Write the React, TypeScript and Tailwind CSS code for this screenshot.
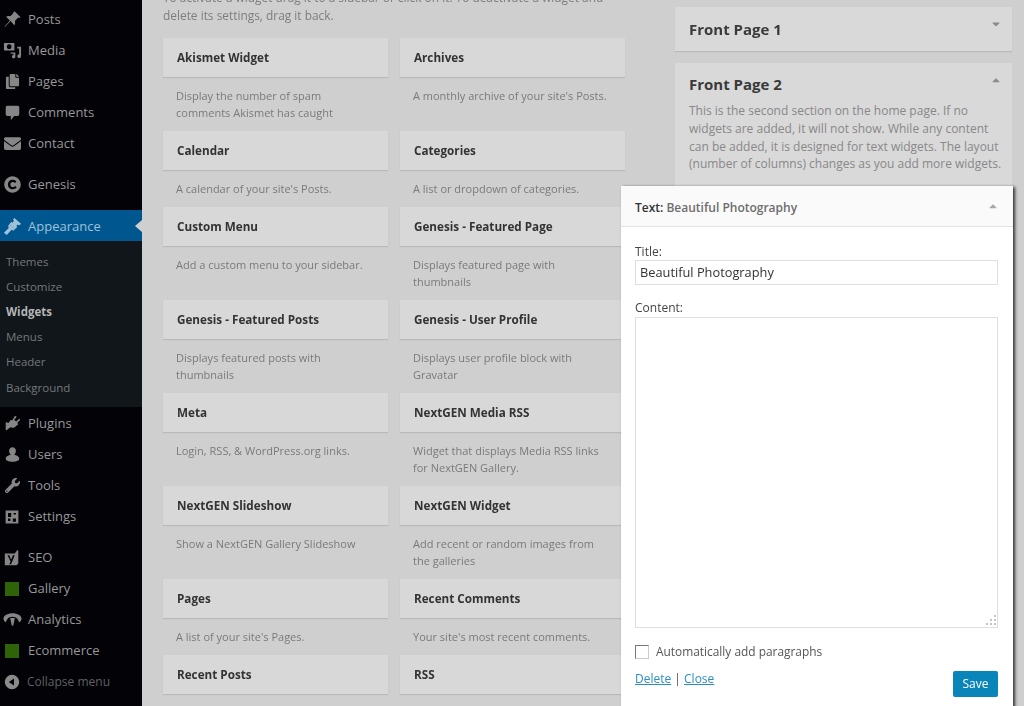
import { ReactNode } from 'react'
import { FaCopy, FaEnvelope, FaWrench, FaCopyright, FaCaretUp, FaCaretDown } from 'react-icons/fa'

const iconClass = 'w-[15px] h-[15px]'

function PinIcon() {
  return (
    <svg viewBox="0 0 20 20" className="w-[19px] h-[19px]" fill="currentColor">
      <path d="M12.5 1.5l6 6-1.5 1-1-.5-3.5 3.500c.6 2 .2 3.400-.7 4.500L8 11.700 2 18l-.5-.5L7.300 11 3.200 7.200C4.300 6.300 5.700 5.900 7.700 6.500L11.200 3l-.5-1z" />
    </svg>
  )
}

function MediaIcon() {
  return (
    <svg viewBox="0 0 20 20" className="w-[19px] h-[19px]" fill="currentColor">
      <path fillRule="evenodd" d="M1 2h11v8H1z M6.500 3.500a2.500 2.500 0 1 0 .01 0z" />
      <path d="M15 6h4v10a2 2 0 1 1-2-2V8h-2z M8 12h5v4.500a1.800 1.800 0 1 1-2-1.800V13.500H8z" />
    </svg>
  )
}

function CommentIcon() {
  return (
    <svg viewBox="0 0 20 20" className="w-[17px] h-[17px]" fill="currentColor">
      <path d="M4 2h12a2 2 0 0 1 2 2v8a2 2 0 0 1-2 2h-4l-4 5v-5H4a2 2 0 0 1-2-2V4a2 2 0 0 1 2-2z" />
    </svg>
  )
}

function BrushIcon() {
  return (
    <svg viewBox="0 0 20 20" className="w-[19px] h-[19px]" fill="currentColor">
      <path d="M12 1l7 6-2 2-1.500-1-1.500 1.500 1 1-2.500 2.500-6-5.500 2.500-2.500 1 1L11.500 4 10.500 2.500z" />
      <path d="M6.500 7.500l6 5.500-1.500 1.500-2-1-5 5.500-3-2.500 5-5-.5-2.200z" />
    </svg>
  )
}

function PlugIcon() {
  return (
    <svg viewBox="0 0 20 20" className="w-[17px] h-[17px]" fill="currentColor">
      <path d="M13 1l2 1-3 4 2.500 1.500L18 4l1 2-3.500 3.500 1.500 1-4 3.500c-2 1.500-4 1-5.500.5L3 18H2V8.500l3.500.5L8 5.500l1.500 1z" />
    </svg>
  )
}

function UserIcon() {
  return (
    <svg viewBox="0 0 20 20" className="w-[17px] h-[17px]" fill="currentColor">
      <path d="M10 1.500a4 4 0 0 1 4 4.500c0 2-1 3.500-2 4.200 3 .6 6 2 6 4.800 0 2-3 3.500-8 3.500s-8-1.500-8-3.500c0-2.800 3-4.200 6-4.800-1-.7-2-2.200-2-4.200a4 4 0 0 1 4-4.500z" />
    </svg>
  )
}

function SettingsIcon() {
  return (
    <svg viewBox="0 0 20 20" className="w-[16px] h-[16px]" fill="currentColor">
      <path fillRule="evenodd" d="M2 2h16v16H2z M5 5v5h4V5z M12 5v2h3V5z M11 12v4h4v-4z M5 12v3h3v-3z" />
    </svg>
  )
}

function YoastIcon() {
  return (
    <svg viewBox="0 0 20 20" className="w-[18px] h-[18px]" fill="currentColor">
      <path fillRule="evenodd" d="M2 5h11l3-4 1 1v14l-2 2H2z M5 7l3.500 7L7 17h2l4-10h-2l-2 5-2-5z" />
    </svg>
  )
}

function AnalyticsIcon() {
  return (
    <svg viewBox="0 0 20 20" className="w-[19px] h-[19px]" fill="currentColor">
      <path d="M10 3.500c5 0 9.500 2.500 9.500 5.500 0 1.500-1 3.500-2.500 4-1-3-2.500-6-7-6s-6 3-7 6C1.500 12.500.5 10.500.5 9 .5 6 5 3.500 10 3.500z" />
      <path d="M7.500 8.500h5l-1.500 7c0 1.500-2 1.500-2 0z" />
    </svg>
  )
}

function CollapseIcon() {
  return (
    <svg viewBox="0 0 20 20" className="w-[16px] h-[16px]" fill="currentColor">
      <path fillRule="evenodd" d="M10 1a9 9 0 1 0 .01 0z M12.500 5.500v9L6 10z" />
    </svg>
  )
}

function GreenSquare() {
  return <span className="block w-[14px] h-[14px] bg-[#2f6308]" />
}

type MenuItem = { label: string; icon: ReactNode }

const topItems: MenuItem[] = [
  { label: 'Posts', icon: <PinIcon /> },
  { label: 'Media', icon: <MediaIcon /> },
  { label: 'Pages', icon: <FaCopy className={iconClass} /> },
  { label: 'Comments', icon: <CommentIcon /> },
  { label: 'Contact', icon: <FaEnvelope className="w-[17px] h-[17px]" /> },
]

const middleItems: MenuItem[] = [
  { label: 'Plugins', icon: <PlugIcon /> },
  { label: 'Users', icon: <UserIcon /> },
  { label: 'Tools', icon: <FaWrench className={iconClass} /> },
  { label: 'Settings', icon: <SettingsIcon /> },
]

const bottomItems: MenuItem[] = [
  { label: 'SEO', icon: <YoastIcon /> },
  { label: 'Gallery', icon: <GreenSquare /> },
  { label: 'Analytics', icon: <AnalyticsIcon /> },
  { label: 'Ecommerce', icon: <GreenSquare /> },
]

const subItems = ['Themes', 'Customize', 'Widgets', 'Menus', 'Header', 'Background']

const widgets = [
  ['Akismet Widget', 'Display the number of spam comments Akismet has caught'],
  ['Archives', "A monthly archive of your site's Posts."],
  ['Calendar', "A calendar of your site's Posts."],
  ['Categories', 'A list or dropdown of categories.'],
  ['Custom Menu', 'Add a custom menu to your sidebar.'],
  ['Genesis - Featured Page', 'Displays featured page with thumbnails'],
  ['Genesis - Featured Posts', 'Displays featured posts with thumbnails'],
  ['Genesis - User Profile', 'Displays user profile block with Gravatar'],
  ['Meta', 'Login, RSS, & WordPress.org links.'],
  ['NextGEN Media RSS', 'Widget that displays Media RSS links for NextGEN Gallery.'],
  ['NextGEN Slideshow', 'Show a NextGEN Gallery Slideshow'],
  ['NextGEN Widget', 'Add recent or random images from the galleries'],
  ['Pages', "A list of your site's Pages."],
  ['Recent Comments', "Your site's most recent comments."],
  ['Recent Posts', ''],
  ['RSS', ''],
]

function SideRow({ item }: { item: MenuItem }) {
  return (
    <div className="flex items-center h-[31px] text-[#989898] text-[13px] font-medium">
      <span className="w-[24px] flex justify-center items-center shrink-0 text-[#868686]">{item.icon}</span>
      <span className="ml-[4px]">{item.label}</span>
    </div>
  )
}

function Sidebar() {
  return (
    <div className="w-[142px] shrink-0 bg-[#020207] pt-[4px] flex flex-col h-[706px] overflow-hidden">
      {topItems.map((item) => (
        <SideRow key={item.label} item={item} />
      ))}
      <div className="mt-[10px]">
        <SideRow item={{ label: 'Genesis', icon: <FaCopyright className="w-[17px] h-[17px]" /> }} />
      </div>
      <div className="mt-[10px] h-[31px] pt-[2px] bg-[#00578f] flex items-center text-[#9fc2d9] text-[13px] font-medium relative">
        <span className="w-[24px] flex justify-center shrink-0">
          <BrushIcon />
        </span>
        <span className="ml-[4px]">Appearance</span>
        <span className="absolute right-0 top-[10px] w-0 h-0 border-y-[6px] border-y-transparent border-r-[7px] border-r-[#cfcfcf]" />
      </div>
      <div className="h-[166px] bg-[#10161a] pt-[7.7px] pl-[6px] text-[11.5px] text-[#74787a]">
        {subItems.map((label) => (
          <div
            key={label}
            className={'h-[25.2px] flex items-center ' + (label === 'Widgets' ? 'font-bold text-[#b5b5b5]' : '')}
          >
            {label}
          </div>
        ))}
      </div>
      <div className="mt-[1px]">
        {middleItems.map((item) => (
          <SideRow key={item.label} item={item} />
        ))}
      </div>
      <div className="mt-[10px]">
        {bottomItems.map((item) => (
          <SideRow key={item.label} item={item} />
        ))}
      </div>
      <div className="flex items-center h-[31px] text-[#5f6163] text-[12px]">
        <span className="w-[24px] flex justify-center shrink-0 text-[#8a8a8a]">
          <CollapseIcon />
        </span>
        <span className="ml-[3px]">Collapse menu</span>
      </div>
    </div>
  )
}

function WidgetGrid() {
  return (
    <div className="w-[462px] shrink-0 ml-[21px] -mt-[12px]">
      <p className="w-[445px] text-[11.9px] leading-[18px] text-[#7d7d7d] h-[36px] mb-[14px]">
        To activate a widget drag it to a sidebar or click on it. To deactivate a widget and delete its settings, drag
        it back.
      </p>
      <div className="grid grid-cols-[225px_225px] gap-x-[12px]">
        {widgets.map(([name, desc]) => (
          <div key={name} className="pb-[10px]">
            <div className="h-[39px] bg-[#d8d8d8] shadow-[0_1px_1px_rgba(0,0,0,0.1)] px-[14px] flex items-center text-[11.7px] font-bold text-[#333]">
              {name}
            </div>
            <p className="mt-[10px] px-[13px] text-[11px] leading-[17px] text-[#7a7a7a]">{desc}</p>
          </div>
        ))}
      </div>
    </div>
  )
}

function SidebarPanels() {
  return (
    <div className="w-[337px] shrink-0 ml-[50px] pt-[7px] flex flex-col gap-[12px]">
      <div className="h-[44px] bg-[#d9d9d9] shadow-[0_1px_1px_rgba(0,0,0,0.1)] pl-[14px] pr-[10px] flex items-center justify-between">
        <span className="text-[15px] font-bold text-[#3a3a3a]">Front Page 1</span>
        <FaCaretDown className="w-[12px] h-[12px] text-[#8b8b8b] mb-[10px]" />
      </div>
      <div className="h-[300px] bg-[#d9d9d9] pl-[14px] pr-[10px] pt-[9px]">
        <div className="flex items-center justify-between h-[24px]">
          <span className="text-[15px] font-bold text-[#3a3a3a]">Front Page 2</span>
          <FaCaretUp className="w-[12px] h-[12px] text-[#8b8b8b] mb-[8px]" />
        </div>
        <p className="mt-[6px] text-[12px] leading-[17.8px] text-[#888]">
          This is the second section on the home page. If no widgets are added, it will not show. While any content can
          be added, it is designed for text widgets. The layout (number of columns) changes as you add more widgets.
        </p>
      </div>
    </div>
  )
}

function TextWidgetPopup() {
  return (
    <div className="absolute left-[621px] top-[186px] w-[392px] h-[530px] bg-white shadow-[2px_1px_3px_rgba(0,0,0,0.75)] blur-[0.3px]">
      <div className="h-[41px] bg-[#fafafa] border-b border-[#e2e2e2] pl-[14px] pr-[14px] pt-[3px] flex items-center justify-between text-[12px] font-semibold">
        <span className="text-[#6d6d6d]">
          <span className="text-[#333]">Text:</span> Beautiful Photography
        </span>
        <FaCaretUp className="w-[12px] h-[12px] text-[#a3aab0] mb-[3px]" />
      </div>
      <div className="pl-[14px] pr-[15px] pt-[16px] text-[12px] text-[#444]">
        <div className="leading-[17px]">Title:</div>
        <div className="h-[25px] border border-[#dfdfdf] px-[4px] flex items-center text-[12.8px] text-[#333]">
          Beautiful Photography
        </div>
        <div className="mt-[14px] leading-[18px]">Content:</div>
        <div className="h-[311px] border border-[#dfdfdf] relative">
          <svg viewBox="0 0 14 14" className="absolute right-0 bottom-0 w-[14px] h-[14px]" fill="#c4c4c4">
            <rect x="11" y="2" width="2" height="2" />
            <rect x="7" y="6" width="2" height="2" />
            <rect x="11" y="6" width="2" height="2" />
            <rect x="3" y="10" width="2" height="2" />
            <rect x="7" y="10" width="2" height="2" />
            <rect x="11" y="10" width="2" height="2" />
          </svg>
        </div>
        <div className="mt-[15px] h-[18px] flex items-center">
          <span className="w-[14px] h-[14px] border border-[#777] border-b-[#ccc] border-r-[#ccc] bg-white" />
          <span className="ml-[7px] text-[11.9px] text-[#555]">Automatically add paragraphs</span>
        </div>
        <div className="mt-[10px] flex justify-between items-start">
          <div className="-mt-[1px] leading-[18px] text-[#555]">
            <span className="underline text-[#2a8fc0]">Delete</span> | <span className="underline text-[#2a8fc0]">Close</span>
          </div>
          <button className="w-[45px] h-[26px] bg-[#0a85ba] rounded-[2px] text-white text-[12px]">Save</button>
        </div>
      </div>
    </div>
  )
}

export default function App() {
  return (
    <div className="relative w-[1024px] h-[706px] overflow-hidden bg-[#cfcfcf] font-['Open_Sans',sans-serif]">
      <div className="flex h-[706px] blur-[0.7px]">
        <Sidebar />
        <WidgetGrid />
        <SidebarPanels />
      </div>
      <TextWidgetPopup />
    </div>
  )
}
